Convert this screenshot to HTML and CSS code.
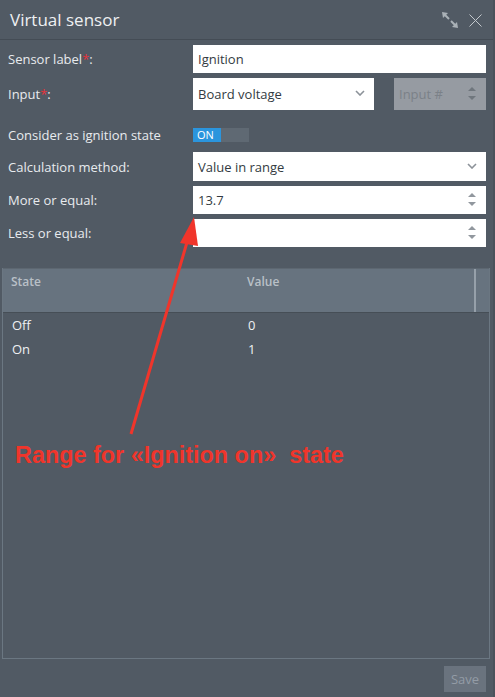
FILE: index.html
```html
<!DOCTYPE html>
<html>
<head>
<meta charset="utf-8">
<link rel="stylesheet" href="styles.css">
</head>
<body>
<div class="window">
  <div class="titlebar">
    <span class="title">Virtual sensor</span>
    <div class="tools">
      <svg class="ico-expand" width="17" height="17" viewBox="0 0 17 17">
        <polygon points="0,0 6,1 1,6" fill="#aab1b7"/>
        <line x1="2" y1="2" x2="7" y2="7" stroke="#aab1b7" stroke-width="2"/>
        <polygon points="16,16 10,15 15,10" fill="#aab1b7"/>
        <line x1="9" y1="9" x2="14" y2="14" stroke="#aab1b7" stroke-width="2"/>
      </svg>
      <svg class="ico-close" width="13" height="13" viewBox="0 0 13 13">
        <line x1="0.5" y1="0.5" x2="12.5" y2="12.5" stroke="#c3c8cd" stroke-width="1"/>
        <line x1="12.5" y1="0.5" x2="0.5" y2="12.5" stroke="#c3c8cd" stroke-width="1"/>
      </svg>
    </div>
  </div>

  <div class="form">
    <label class="lbl">Sensor label<span class="req">*</span>:</label>
    <div class="ctl"><div class="field h28">Ignition</div></div>

    <label class="lbl">Input<span class="req">*</span>:</label>
    <div class="ctl split">
      <div class="field select h32 narrow">Board voltage
        <svg class="chev" width="10" height="6" viewBox="0 0 10 6"><polyline points="1,1 5,5 9,1" fill="none" stroke="#8c9299" stroke-width="1.6"/></svg>
      </div>
      <div class="field disabled h32 small">Input #
        <svg class="spin" width="8" height="14" viewBox="0 0 8 14"><polygon points="4,0 8,4 0,4" fill="#6f767d"/><polygon points="0,9 8,9 4,13" fill="#6f767d"/></svg>
      </div>
    </div>

    <label class="lbl toggle-row">Consider as ignition state</label>
    <div class="ctl toggle-row">
      <div class="toggle"><span class="on">ON</span><span class="off"></span></div>
    </div>

    <label class="lbl">Calculation method:</label>
    <div class="ctl"><div class="field select h29">Value in range
      <svg class="chev" width="10" height="6" viewBox="0 0 10 6"><polyline points="1,1 5,5 9,1" fill="none" stroke="#8c9299" stroke-width="1.6"/></svg>
    </div></div>

    <label class="lbl">More or equal:</label>
    <div class="ctl"><div class="field h28">13.7
      <svg class="spin" width="8" height="14" viewBox="0 0 8 14"><polygon points="4,0 8,4 0,4" fill="#91979e"/><polygon points="0,9 8,9 4,13" fill="#91979e"/></svg>
    </div></div>

    <label class="lbl">Less or equal:</label>
    <div class="ctl"><div class="field h28">
      <svg class="spin" width="8" height="14" viewBox="0 0 8 14"><polygon points="4,0 8,4 0,4" fill="#91979e"/><polygon points="0,9 8,9 4,13" fill="#91979e"/></svg>
    </div></div>
  </div>

  <div class="table">
    <div class="thead">
      <div class="th c1">State</div>
      <div class="th c2">Value</div>
      <div class="th c3"></div>
    </div>
    <div class="tr"><div class="td c1">Off</div><div class="td c2">0</div></div>
    <div class="tr"><div class="td c1">On</div><div class="td c2">1</div></div>
  </div>

  <div class="footer">
    <button class="save">Save</button>
  </div>

  <svg class="annot" width="495" height="697" viewBox="0 0 495 697">
    <line x1="131" y1="434" x2="190" y2="232" stroke="#f0352b" stroke-width="3"/>
    <polygon points="194,217 180,243 198,246" fill="#f0352b"/>
  </svg>
  <div class="annot-text">Range for «Ignition on»&nbsp; state</div>
</div>
</body>
</html>
```

FILE: styles.css
```css
html, body {
  margin: 0;
  padding: 0;
}
body {
  width: 495px;
  height: 697px;
  overflow: hidden;
  background: #515a64;
  font-family: "Open Sans", "DejaVu Sans", sans-serif;
  font-size: 13px;
}
.window {
  position: relative;
  width: 495px;
  height: 697px;
  background: #515a64;
  box-sizing: border-box;
  border-right: 2px solid #4a525b;
}
.titlebar {
  height: 39px;
  border-bottom: 1px solid #444c55;
  display: flex;
  align-items: center;
  justify-content: space-between;
  padding: 0 11px 0 10px;
}
.title {
  color: #eef0f2;
  font-size: 17px;
  margin-top: -1px;
}
.tools {
  display: flex;
  align-items: center;
  gap: 10px;
  margin-top: 1px;
}
.ico-expand { display: block; }
.ico-close { display: block; }

.form {
  display: grid;
  grid-template-columns: 185px 1fr;
  row-gap: 5px;
  padding: 5px 7px 0 8px;
}
.lbl {
  color: #e8ebee;
  display: flex;
  align-items: center;
}
.req { color: #e8323b; }
.ctl { display: flex; }
.split { justify-content: space-between; }
.field {
  position: relative;
  flex: 1;
  background: #ffffff;
  color: #333b42;
  display: flex;
  align-items: center;
  padding-left: 5px;
  box-sizing: border-box;
}
.h28 { height: 28px; }
.h29 { height: 29px; }
.h32 { height: 32px; }
.narrow { flex: 0 0 181px; }
.small { flex: 0 0 92px; }
.disabled {
  background: #969ba2;
  color: #7b8188;
}
.chev {
  position: absolute;
  right: 9px;
  top: 50%;
  margin-top: -4px;
}
.spin {
  position: absolute;
  right: 10px;
  top: 50%;
  margin-top: -7px;
}
.toggle-row {
  margin: 13px 0 5px;
  height: 14px;
}
.toggle {
  display: flex;
  width: 56px;
  height: 14px;
}
.toggle .on {
  width: 28px;
  background: #2b95dd;
  color: #ffffff;
  font-size: 11px;
  line-height: 14px;
  padding-left: 4px;
  box-sizing: border-box;
}
.toggle .off {
  flex: 1;
  background: #5f6973;
}

.table {
  margin: 21px 3px 0 2px;
  height: 391px;
  border: 1px solid #6b7782;
  border-top: none;
  box-sizing: border-box;
}
.thead {
  display: flex;
  height: 45px;
  background: #67737f;
  border-top: 1px solid #5d6771;
  border-bottom: 1px solid #464e56;
  box-sizing: border-box;
}
.th {
  color: #b9c0c7;
  font-weight: 600;
  font-size: 12px;
  padding-top: 4px;
}
.c1 { width: 236px; padding-left: 8px; box-sizing: border-box; }
.c2 { width: 235px; padding-left: 8px; box-sizing: border-box; }
.th.c3 {
  flex: 1;
  border-left: 2px solid #96a0aa;
  padding: 0;
}
.tr {
  display: flex;
  height: 24px;
  align-items: center;
}
.td {
  color: #eef0f2;
  font-size: 13px;
}
.td.c1 { padding-left: 9px; }
.td.c2 { padding-left: 9px; }

.footer {
  display: flex;
  justify-content: flex-end;
  padding: 7px 7px 0 0;
}
.save {
  width: 42px;
  height: 26px;
  border: none;
  background: #6a737e;
  color: #939ca6;
  font-family: "Open Sans", "DejaVu Sans", sans-serif;
  font-size: 13px;
  padding: 0;
}

.annot {
  position: absolute;
  left: 0;
  top: 0;
  pointer-events: none;
}
.annot-text {
  position: absolute;
  left: 15px;
  top: 441px;
  color: #f0352b;
  font-family: "Liberation Sans", Arial, sans-serif;
  font-weight: bold;
  font-size: 23.4px;
  line-height: 28px;
  white-space: nowrap;
}
```
